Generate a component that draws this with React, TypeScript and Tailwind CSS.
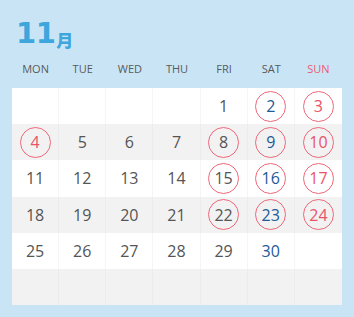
import React from "react";

type Cell = { d?: number; c?: "red" | "blue" | "gray"; circle?: boolean };

const rows: Cell[][] = [
  [{}, {}, {}, {}, { d: 1 }, { d: 2, c: "blue", circle: true }, { d: 3, c: "red", circle: true }],
  [{ d: 4, c: "red", circle: true }, { d: 5 }, { d: 6 }, { d: 7 }, { d: 8, circle: true }, { d: 9, c: "blue", circle: true }, { d: 10, c: "red", circle: true }],
  [{ d: 11 }, { d: 12 }, { d: 13 }, { d: 14 }, { d: 15, circle: true }, { d: 16, c: "blue", circle: true }, { d: 17, c: "red", circle: true }],
  [{ d: 18 }, { d: 19 }, { d: 20 }, { d: 21 }, { d: 22, circle: true }, { d: 23, c: "blue", circle: true }, { d: 24, c: "red", circle: true }],
  [{ d: 25 }, { d: 26 }, { d: 27 }, { d: 28 }, { d: 29 }, { d: 30, c: "blue" }, {}],
  [{}, {}, {}, {}, {}, {}, {}],
];

const days = ["MON", "TUE", "WED", "THU", "FRI", "SAT", "SUN"];

export default function App() {
  return (
    <div
      className="w-[354px] h-[317px] bg-[#c9e5f5] px-[12px] overflow-hidden"
      style={{ fontFamily: '"Open Sans", "Noto Sans CJK JP", sans-serif' }}
    >
      <div className="h-[51px] flex items-end pl-[4px] pb-[3px]">
        <span
          className="text-[#3ea6dd] font-extrabold text-[29px] leading-none tracking-[-0.5px]"
          style={{ fontFamily: '"DejaVu Sans", sans-serif' }}
        >
          11
        </span>
        <span
          className="text-[#3ea6dd] font-black text-[17px] leading-none ml-[1px]"
          style={{ fontFamily: '"Noto Sans CJK JP", sans-serif' }}
        >
          月
        </span>
      </div>
      <div className="grid grid-cols-7 h-[37px] items-center">
        {days.map((d) => (
          <div
            key={d}
            className={`text-center text-[11px] ${d === "SUN" ? "text-[#ec5b73]" : "text-[#5a5a5a]"}`}
          >
            {d}
          </div>
        ))}
      </div>
      <div className="grid grid-rows-6 h-[217px]">
        {rows.map((row, ri) => (
          <div key={ri} className={`grid grid-cols-7 ${ri % 2 === 1 ? "bg-[#f2f2f2]" : "bg-white"}`}>
            {row.map((cell, ci) => (
              <div
                key={ci}
                className={`flex items-center justify-center ${ci < 6 ? (ri % 2 === 1 ? "border-r border-[#ececec]" : "border-r border-[#f5f5f5]") : ""}`}
              >
                {cell.d !== undefined && (
                  <div
                    className={`flex items-center justify-center w-[31px] h-[31px] rounded-full text-[16px] ${
                      cell.circle ? "border-[1.75px] border-[#f0687c]" : ""
                    } ${
                      cell.c === "red" ? "text-[#e9546b]" : cell.c === "blue" ? "text-[#1d5a98] font-medium" : "text-[#555555]"
                    }`}
                  >
                    {cell.d}
                  </div>
                )}
              </div>
            ))}
          </div>
        ))}
      </div>
    </div>
  );
}
